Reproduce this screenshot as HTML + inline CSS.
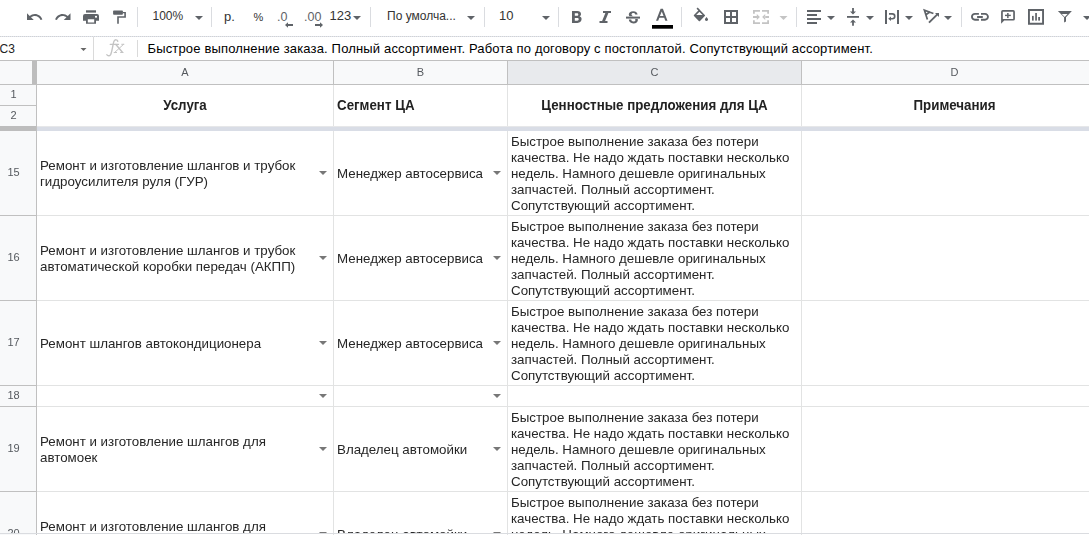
<!DOCTYPE html>
<html><head><meta charset="utf-8">
<style>
html,body{margin:0;padding:0;}
body{width:1089px;height:535px;overflow:hidden;position:relative;background:#fff;font-family:"Liberation Sans",sans-serif;}
.a{position:absolute;}
.hl{position:absolute;height:1px;}
.vl{position:absolute;width:1px;}
.cell{margin-top:1px;position:absolute;display:flex;align-items:center;font-size:13.333px;line-height:16px;color:#262626;will-change:transform;white-space:nowrap;overflow:hidden;}
.hdr{position:absolute;display:flex;align-items:center;justify-content:center;font-size:13.333px;font-weight:bold;color:#222;will-change:transform;white-space:nowrap;}
.rn{will-change:transform;margin-top:-1px;position:absolute;left:0;width:27px;text-align:center;font-size:11px;color:#55595e;display:flex;align-items:center;justify-content:center;}
.cl{will-change:transform;margin-top:-1px;position:absolute;top:61px;height:23px;font-size:11px;color:#55595e;display:flex;align-items:center;justify-content:center;}
.hs{display:inline-block;line-height:16px;transform:scaleY(1.1);transform-origin:50% 12.5px;}
.dd{position:absolute;width:0;height:0;border-left:4px solid transparent;border-right:4px solid transparent;border-top:4px solid #777;}
</style></head><body>

<!-- TOOLBAR -->
<svg class="a" style="left:0;top:0" width="1089" height="36" viewBox="0 0 1089 36">
  <g fill="#5f6368">
    <!-- undo -->
    <path transform="translate(25.5,8) scale(0.75)" d="M12.5 8c-2.65 0-5.05.99-6.9 2.6L2 7v9h9l-3.62-3.62c1.39-1.16 3.16-1.88 5.12-1.88 3.54 0 6.55 2.31 7.6 5.5l2.37-.78C21.08 11.03 17.15 8 12.5 8z"/>
    <!-- redo -->
    <path transform="translate(54,8) scale(0.75)" d="M18.4 10.6C16.55 8.99 14.15 8 11.5 8c-4.65 0-8.58 3.03-9.96 7.22L3.9 16c1.05-3.19 4.05-5.5 7.6-5.5 1.95 0 3.73.72 5.12 1.88L13 16h9V7l-3.6 3.6z"/>
    <!-- print -->
    <rect x="86" y="10.3" width="10" height="2.3"/>
    <path d="M85 13.9h12a2 2 0 0 1 2 2v4.8h-3v-2.6h-10v2.6h-3v-4.8a2 2 0 0 1 2-2z"/>
    <rect x="95" y="15.9" width="2" height="1.7" fill="#fff"/>
    <path d="M86 18.1h10v5.6h-10z M87.8 19.3v3.1h6.4v-3.1z" fill-rule="evenodd"/>
    <!-- paint format -->
    <rect x="113.1" y="10.4" width="9.8" height="4.3" rx="0.8"/>
    <path d="M122.9 12H125.9V17.7H118.8V23.7H117.2V16.3H124.3V13.3H122.9Z"/>
  </g>
  <!-- separators -->
  <g fill="#dadce0">
    <rect x="137" y="7" width="1" height="20"/>
    <rect x="211" y="7" width="1" height="20"/>
    <rect x="370" y="7" width="1" height="20"/>
    <rect x="484" y="7" width="1" height="20"/>
    <rect x="558" y="7" width="1" height="20"/>
    <rect x="681" y="7" width="1" height="20"/>
    <rect x="796" y="7" width="1" height="20"/>
    <rect x="961" y="7" width="1" height="20"/>
  </g>
  <g font-family="Liberation Sans" fill="#333">
    <text x="152.5" y="20" font-size="12">100%</text>
    <text x="224" y="21" font-size="13">р.</text>
    <text x="253.5" y="20.7" font-size="11">%</text>
    <text x="277" y="21" font-size="12.5" fill="#5f6368">.0</text>
    <text x="304" y="21" font-size="12.5" fill="#5f6368">.00</text>
    <text x="329.5" y="20" font-size="13">123</text>
    <text x="387" y="20" font-size="12">По умолча...</text>
    <text x="499" y="20" font-size="13">10</text>
  </g>
  <g fill="#5f6368">
    <!-- dropdown arrows -->
    <path d="M195 16h8l-4 4z"/>
    <path d="M353 16h8l-4 4z"/>
    <path d="M467 16h8l-4 4z"/>
    <path d="M542 16h8l-4 4z"/>
    <path d="M827 16h8l-4 4z"/>
    <path d="M866 16h8l-4 4z"/>
    <path d="M905 16h8l-4 4z"/>
    <path d="M944 16h8l-4 4z"/>
    <path d="M1083 16h8l-4 4z"/>
    <!-- decimal arrows -->
    <path d="M287.5 24h5.5v2h-5.5z M285 25l3-2.8v5.6z"/>
    <path d="M315 24h5.5v2h-5.5z"/><path d="M323 25l-3 2.8v-5.6z"/>
    <!-- bold -->
    <path d="M572 11h5.2c2.4 0 3.8 1.2 3.8 3 0 1.1-.6 1.9-1.5 2.3 1.2.4 2.1 1.3 2.1 2.8 0 2.2-1.6 3.9-4.2 3.9h-5.4z M574.8 13.3v2.5h2.2c.9 0 1.3-.5 1.3-1.25s-.4-1.25-1.3-1.25z M574.8 18v2.7h2.4c1 0 1.5-.55 1.5-1.35s-.5-1.35-1.5-1.35z" fill-rule="evenodd"/>
    <!-- italic -->
    <path d="M603 11h8v2h-2.6l-3.3 8h2.4v2h-8v-2h2.6l3.3-8h-2.4z"/>
    <!-- strike -->
    <path d="M626 16.6h14v2h-14z"/>
    <path d="M637.6 14.6c0-1.6-1.6-3.4-4.4-3.4-2.8 0-4.4 1.6-4.4 3.2 0 .9.4 1.5 1 1.9h3.8c-1.3-.4-2.1-.9-2.1-1.8 0-.9.7-1.5 1.8-1.5 1.2 0 1.9.7 1.9 1.6z"/>
    <path d="M634.9 18.9c.4.4.6.7.6 1.2 0 .9-.8 1.5-2 1.5-1.5 0-2.2-.8-2.2-2h-2.5c0 2.3 2 3.8 4.6 3.8 2.8 0 4.5-1.4 4.5-3.4 0-.5-.1-.8-.3-1.1z"/>
    <!-- text color A -->
    <path d="M660.6 8.8h2.3l4.6 11.9h-2.2l-1.1-3h-4.9l-1.1 3h-2.2z M661.75 11.4l-1.8 4.6h3.6z" fill-rule="evenodd"/>
  </g>
  <rect x="652" y="25" width="21" height="3.7" fill="#000"/>
  <g fill="#5f6368">
    <!-- fill bucket -->
    <path d="M694.6 15.5L699.4 10.7L704.2 15.5L699.4 20.3Z M697.1 8.1L700 11" fill="none" stroke="#5f6368" stroke-width="1.7" stroke-linejoin="round"/>
    <path d="M694 15.1H704.8L699.4 20.6Z"/>
    <path d="M706.5 16.9l1.35 1.9a1.55 1.55 0 1 1-2.7 0z"/>
    <!-- borders -->
    <path d="M724 10h14v14h-14z M726 12v4h4v-4z M732 12v4h4v-4z M726 18v4h4v-4z M732 18v4h4v-4z" fill-rule="evenodd"/>
  </g>
  <g fill="#c4c4c4">
    <!-- merge disabled -->
    <path d="M753 10h7v1.8h-5.2v2h-1.8z M762 10h7v3.8h-1.8v-2h-5.2z M753 20.2h1.8v2h5.2v1.8h-7z M767.2 20.2h1.8v3.8h-7v-1.8h5.2z"/>
    <path d="M753 16.1h4.2v1.8h-4.2z M756.8 14l3.1 3-3.1 3z"/>
    <path d="M764.8 16.1h4.2v1.8h-4.2z M765.2 14l-3.1 3 3.1 3z"/>
    <path d="M779.5 16h8l-4 4z"/>
  </g>
  <g fill="#5f6368">
    <!-- align left -->
    <rect x="807" y="10" width="14" height="2"/>
    <rect x="807" y="14" width="10" height="2"/>
    <rect x="807" y="18" width="14" height="2"/>
    <rect x="807" y="22" width="10" height="2"/>
    <!-- vertical align middle -->
    <rect x="847" y="16" width="12" height="1.8"/>
    <path d="M852.1 8h1.8v3.5h2.1l-3 3-3-3h2.1z"/>
    <path d="M853 19.5l3 3h-2.1v3.3h-1.8v-3.3h-2.1z"/>
    <!-- wrap -->
    <rect x="885" y="10" width="2" height="14"/>
    <rect x="897" y="10" width="2" height="14"/>
    <path d="M889 13.9h3.3a2.45 2.45 0 0 1 0 4.9h-2.3" fill="none" stroke="#5f6368" stroke-width="1.6"/><path d="M888.2 18.8l2.8-2.3v4.6z"/>
    <!-- text rotation -->
    <path d="M933.4 13.5L924.4 10.2 927.4 19.4 M925.8 14.8L930.2 11.8" fill="none" stroke="#5f6368" stroke-width="1.7" stroke-linejoin="miter"/>
    <path d="M929 22.7L937.6 14.1" fill="none" stroke="#5f6368" stroke-width="1.9"/>
    <path d="M935 13h4v4z"/>
    <!-- link -->
    <path d="M971 16.8c0-2.2 1.8-3.9 3.9-3.9h4v1.9h-4c-1.1 0-2 .9-2 2s.9 2 2 2h4v1.9h-4c-2.2 0-3.9-1.8-3.9-3.9z M981 12.9h4c2.2 0 3.9 1.8 3.9 3.9s-1.8 3.9-3.9 3.9h-4v-1.9h4c1.1 0 2-.9 2-2s-.9-2-2-2h-4z M977.1 16.1h5.7v1.8h-5.7z" />
    <!-- comment -->
    <path d="M1002.8 10.1h10.4a1.7 1.7 0 0 1 1.7 1.7v7.1a1.7 1.7 0 0 1-1.7 1.7h-9l-3.1 3.1v-11.9a1.7 1.7 0 0 1 1.7-1.7z M1002.8 11.8v7.1h10.4v-7.1z" fill-rule="evenodd"/>
    <rect x="1005" y="14.7" width="5.8" height="1.4"/>
    <rect x="1007.1" y="13" width="1.5" height="5.1"/>
    <!-- chart -->
    <path d="M1028 9h16v15.7h-16z M1029.9 10.9v11.9h12.2v-11.9z" fill-rule="evenodd"/>
    <rect x="1032" y="15.9" width="1.7" height="4.7"/>
    <rect x="1035.2" y="13" width="1.7" height="7.6"/>
    <rect x="1038.2" y="17" width="1.8" height="3.6"/>
    <!-- filter -->
    <path d="M1057.9 10.9H1071.9L1066 17.3V21.4L1064.1 22.6V17.3Z M1061.8 14H1067.6L1064.7 17.1Z" fill-rule="evenodd"/>
  </g>
</svg>
<div class="hl" style="left:0;top:36px;width:1089px;background:repeating-linear-gradient(90deg,#d2d2d2 0 1px,#dfe4ee 1px 2px)"></div>

<!-- FORMULA BAR -->
<div class="a" style="left:-0.5px;top:40.5px;font-size:12px;line-height:16px;color:#222">C3</div>
<svg class="a" style="left:0;top:37px" width="160" height="23" viewBox="0 37 160 23">
  <path d="M80.5 48h6l-3 3z" fill="#666"/>
  <rect x="93" y="37" width="1" height="23" fill="#dadada"/>
  <rect x="137" y="40" width="1" height="17" fill="#dadada"/>
  <g fill="none" stroke="#c4c4c4" stroke-linecap="round">
    <path d="M117.8 41.3C117.3 39.6 115.1 39.2 114.1 41C113 43 112.1 52 110.6 54.6C109.6 56.2 107.6 56.1 106.9 54.7" stroke-width="1.4"/>
    <path d="M110.2 44.4H118.6" stroke-width="1.1"/>
    <path d="M115.9 44.5L122.4 52.3" stroke-width="1.4"/>
    <path d="M123.4 44.5L114.8 52.3" stroke-width="1"/>
    <path d="M114.1 52.5H116.6M120.6 52.5H123.1M121.7 44.3H123.9" stroke-width="1"/>
  </g>
</svg>
<div class="a" style="left:147.5px;top:41px;font-size:13px;line-height:16px;color:#000;letter-spacing:0.16px;white-space:nowrap">Быстрое выполнение заказа. Полный ассортимент. Работа по договору с постоплатой. Сопутствующий ассортимент.</div>

<!-- COLUMN HEADERS -->
<div class="hl" style="left:0;top:60px;width:1089px;background:#c0c0c0"></div>
<div class="a" style="left:0;top:61px;width:1089px;height:23px;background:#f8f9fa"></div>
<div class="a" style="left:508px;top:61px;width:293px;height:23px;background:#e8eaed"></div>
<div class="hl" style="left:0;top:84px;width:1089px;background:#c0c0c0"></div>
<div class="a" style="left:32px;top:61px;width:5px;height:23px;background:#bdbdbd"></div>
<div class="vl" style="left:333px;top:61px;height:23px;background:#c0c0c0"></div>
<div class="vl" style="left:507px;top:61px;height:23px;background:#c0c0c0"></div>
<div class="vl" style="left:801px;top:61px;height:23px;background:#c0c0c0"></div>
<div class="cl" style="left:37px;width:296px">A</div>
<div class="cl" style="left:334px;width:173px">B</div>
<div class="cl" style="left:508px;width:293px">C</div>
<div class="cl" style="left:802px;width:305px">D</div>

<!-- ROW HEADERS -->
<div class="a" style="left:0;top:85px;width:36px;height:450px;background:#f8f9fa"></div>
<div class="vl" style="left:36px;top:85px;height:450px;background:#c0c0c0"></div>
<div class="hl" style="left:0;top:105px;width:36px;background:#c0c0c0"></div>
<div class="hl" style="left:0;top:215px;width:36px;background:#c0c0c0"></div>
<div class="hl" style="left:0;top:300px;width:36px;background:#c0c0c0"></div>
<div class="hl" style="left:0;top:385px;width:36px;background:#c0c0c0"></div>
<div class="hl" style="left:0;top:406px;width:36px;background:#c0c0c0"></div>
<div class="hl" style="left:0;top:491px;width:36px;background:#c0c0c0"></div>
<div class="rn" style="top:85px;height:20px">1</div>
<div class="rn" style="top:106px;height:20px">2</div>
<div class="rn" style="top:131px;height:84px">15</div>
<div class="rn" style="top:216px;height:84px">16</div>
<div class="rn" style="top:301px;height:84px">17</div>
<div class="rn" style="top:386px;height:20px">18</div>
<div class="rn" style="top:407px;height:84px">19</div>
<div class="rn" style="top:492px;height:84px">20</div>

<!-- GRID LINES -->
<div class="vl" style="left:333px;top:85px;height:450px;background:#e2e3e3"></div>
<div class="vl" style="left:507px;top:85px;height:450px;background:#e2e3e3"></div>
<div class="vl" style="left:801px;top:85px;height:450px;background:#e2e3e3"></div>
<div class="hl" style="left:37px;top:215px;width:1052px;background:#e2e3e3"></div>
<div class="hl" style="left:37px;top:300px;width:1052px;background:#e2e3e3"></div>
<div class="hl" style="left:37px;top:385px;width:1052px;background:#e2e3e3"></div>
<div class="hl" style="left:37px;top:406px;width:1052px;background:#e2e3e3"></div>
<div class="hl" style="left:37px;top:491px;width:1052px;background:#e2e3e3"></div>

<!-- FREEZE BAR -->
<div class="a" style="left:0;top:126px;width:36px;height:5px;background:#bdbdbd"></div>
<div class="a" style="left:37px;top:126px;width:1052px;height:1px;background:#e6e7e9"></div>
<div class="a" style="left:37px;top:127px;width:1052px;height:4px;background:#d9dde6"></div>

<!-- HEADER ROW (merged rows 1-2) -->
<div class="hdr" style="left:37px;top:85px;width:296px;height:41px"><span class="hs">Услуга</span></div>
<div class="hdr" style="left:337px;top:85px;width:170px;height:41px;justify-content:flex-start"><span class="hs">Сегмент ЦА</span></div>
<div class="hdr" style="left:508px;top:85px;width:293px;height:41px"><span class="hs">Ценностные предложения для ЦА</span></div>
<div class="hdr" style="left:802px;top:85px;width:305px;height:41px"><span class="hs">Примечания</span></div>

<!-- ROW 15 -->
<div class="cell" style="left:40px;top:131px;width:280px;height:84px">Ремонт и изготовление шлангов и трубок<br>гидроусилителя руля (ГУР)</div>
<div class="dd" style="left:319px;top:171px"></div>
<div class="cell" style="left:337px;top:131px;width:160px;height:84px">Менеджер автосервиса</div>
<div class="dd" style="left:493px;top:171px"></div>
<div class="cell" style="left:511px;top:131px;width:288px;height:84px">Быстрое выполнение заказа без потери<br>качества. Не надо ждать поставки несколько<br>недель. Намного дешевле оригинальных<br>запчастей. Полный ассортимент.<br>Сопутствующий ассортимент.</div>

<!-- ROW 16 -->
<div class="cell" style="left:40px;top:216px;width:280px;height:84px">Ремонт и изготовление шлангов и трубок<br>автоматической коробки передач (АКПП)</div>
<div class="dd" style="left:319px;top:256px"></div>
<div class="cell" style="left:337px;top:216px;width:160px;height:84px">Менеджер автосервиса</div>
<div class="dd" style="left:493px;top:256px"></div>
<div class="cell" style="left:511px;top:216px;width:288px;height:84px">Быстрое выполнение заказа без потери<br>качества. Не надо ждать поставки несколько<br>недель. Намного дешевле оригинальных<br>запчастей. Полный ассортимент.<br>Сопутствующий ассортимент.</div>

<!-- ROW 17 -->
<div class="cell" style="left:40px;top:301px;width:280px;height:84px">Ремонт шлангов автокондиционера</div>
<div class="dd" style="left:319px;top:341px"></div>
<div class="cell" style="left:337px;top:301px;width:160px;height:84px">Менеджер автосервиса</div>
<div class="dd" style="left:493px;top:341px"></div>
<div class="cell" style="left:511px;top:301px;width:288px;height:84px">Быстрое выполнение заказа без потери<br>качества. Не надо ждать поставки несколько<br>недель. Намного дешевле оригинальных<br>запчастей. Полный ассортимент.<br>Сопутствующий ассортимент.</div>

<!-- ROW 18 -->
<div class="dd" style="left:319px;top:394px"></div>
<div class="dd" style="left:493px;top:394px"></div>

<!-- ROW 19 -->
<div class="cell" style="left:40px;top:407px;width:280px;height:84px">Ремонт и изготовление шлангов для<br>автомоек</div>
<div class="dd" style="left:319px;top:447px"></div>
<div class="cell" style="left:337px;top:407px;width:160px;height:84px">Владелец автомойки</div>
<div class="dd" style="left:493px;top:447px"></div>
<div class="cell" style="left:511px;top:407px;width:288px;height:84px">Быстрое выполнение заказа без потери<br>качества. Не надо ждать поставки несколько<br>недель. Намного дешевле оригинальных<br>запчастей. Полный ассортимент.<br>Сопутствующий ассортимент.</div>

<!-- ROW 20 -->
<div class="cell" style="left:40px;top:492px;width:280px;height:84px">Ремонт и изготовление шлангов для<br>автомоек</div>
<div class="dd" style="left:319px;top:532px"></div>
<div class="cell" style="left:337px;top:492px;width:160px;height:84px">Владелец автомойки</div>
<div class="dd" style="left:493px;top:532px"></div>
<div class="cell" style="left:511px;top:492px;width:288px;height:84px">Быстрое выполнение заказа без потери<br>качества. Не надо ждать поставки несколько<br>недель. Намного дешевле оригинальных<br>запчастей. Полный ассортимент.<br>Сопутствующий ассортимент.</div>

<!-- bottom line -->
<div class="hl" style="left:0;top:533px;width:1089px;background:#dadce0"></div>
<div class="a" style="left:0;top:534px;width:36px;height:1px;background:#f8f9fa"></div>
<div class="a" style="left:36px;top:534px;width:1px;height:1px;background:#c0c0c0"></div>
<div class="a" style="left:37px;top:534px;width:1052px;height:1px;background:#fff"></div>
<div class="vl" style="left:333px;top:534px;height:1px;background:#e2e3e3"></div>
<div class="vl" style="left:507px;top:534px;height:1px;background:#e2e3e3"></div>
<div class="vl" style="left:801px;top:534px;height:1px;background:#e2e3e3"></div>
</body></html>
